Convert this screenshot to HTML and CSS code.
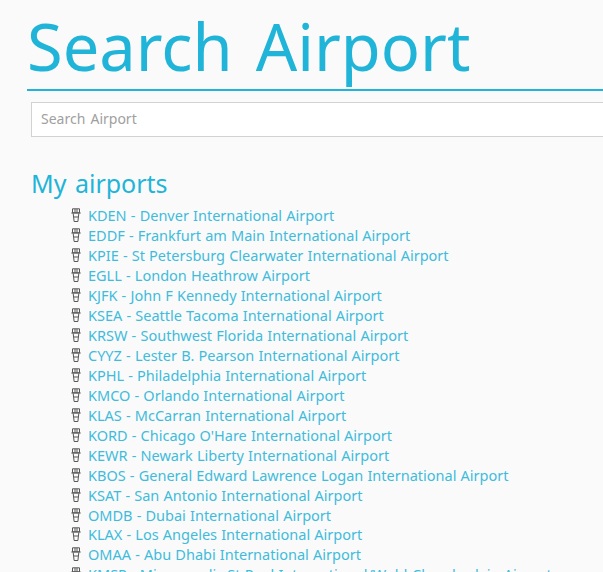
FILE: index.html
```html
<!DOCTYPE html>
<html lang="en">
  <head>
    <meta charset="UTF-8" />
    <meta name="viewport" content="width=device-width, initial-scale=1.0" />
    <title>Search Airport</title>
    <link rel="stylesheet" href="styles.css">
  </head>
  <body>
    <div class="page">
      <h1 class="page-title">Search Airport</h1>
      <input class="search-input" type="text" placeholder="Search Airport" />
      <h2 class="section-title">My airports</h2>
      <ul class="airport-list">
        <li><svg class="tower" viewBox="0 0 10 14"><use href="#tower-icon"/></svg><a href="#">KDEN - Denver International Airport</a></li>
        <li><svg class="tower" viewBox="0 0 10 14"><use href="#tower-icon"/></svg><a href="#">EDDF - Frankfurt am Main International Airport</a></li>
        <li><svg class="tower" viewBox="0 0 10 14"><use href="#tower-icon"/></svg><a href="#">KPIE - St Petersburg Clearwater International Airport</a></li>
        <li><svg class="tower" viewBox="0 0 10 14"><use href="#tower-icon"/></svg><a href="#">EGLL - London Heathrow Airport</a></li>
        <li><svg class="tower" viewBox="0 0 10 14"><use href="#tower-icon"/></svg><a href="#">KJFK - John F Kennedy International Airport</a></li>
        <li><svg class="tower" viewBox="0 0 10 14"><use href="#tower-icon"/></svg><a href="#">KSEA - Seattle Tacoma International Airport</a></li>
        <li><svg class="tower" viewBox="0 0 10 14"><use href="#tower-icon"/></svg><a href="#">KRSW - Southwest Florida International Airport</a></li>
        <li><svg class="tower" viewBox="0 0 10 14"><use href="#tower-icon"/></svg><a href="#">CYYZ - Lester B. Pearson International Airport</a></li>
        <li><svg class="tower" viewBox="0 0 10 14"><use href="#tower-icon"/></svg><a href="#">KPHL - Philadelphia International Airport</a></li>
        <li><svg class="tower" viewBox="0 0 10 14"><use href="#tower-icon"/></svg><a href="#">KMCO - Orlando International Airport</a></li>
        <li><svg class="tower" viewBox="0 0 10 14"><use href="#tower-icon"/></svg><a href="#">KLAS - McCarran International Airport</a></li>
        <li><svg class="tower" viewBox="0 0 10 14"><use href="#tower-icon"/></svg><a href="#">KORD - Chicago O'Hare International Airport</a></li>
        <li><svg class="tower" viewBox="0 0 10 14"><use href="#tower-icon"/></svg><a href="#">KEWR - Newark Liberty International Airport</a></li>
        <li><svg class="tower" viewBox="0 0 10 14"><use href="#tower-icon"/></svg><a href="#">KBOS - General Edward Lawrence Logan International Airport</a></li>
        <li><svg class="tower" viewBox="0 0 10 14"><use href="#tower-icon"/></svg><a href="#">KSAT - San Antonio International Airport</a></li>
        <li><svg class="tower" viewBox="0 0 10 14"><use href="#tower-icon"/></svg><a href="#">OMDB - Dubai International Airport</a></li>
        <li><svg class="tower" viewBox="0 0 10 14"><use href="#tower-icon"/></svg><a href="#">KLAX - Los Angeles International Airport</a></li>
        <li><svg class="tower" viewBox="0 0 10 14"><use href="#tower-icon"/></svg><a href="#">OMAA - Abu Dhabi International Airport</a></li>
        <li><svg class="tower" viewBox="0 0 10 14"><use href="#tower-icon"/></svg><a href="#">KMSP - Minneapolis St Paul International/Wold-Chamberlain Airport</a></li>
      </ul>
    </div>
    <svg class="icon-defs" aria-hidden="true">
      <symbol id="tower-icon" viewBox="0 0 10 14">
        <path d="M1.5 .8h7v4h-7zM0.3 5h9.4M2.2 5.5l.9 8h3.8l.9-8M3 9h4M4 1v3.5M6 1v3.5" fill="none" stroke="#555" stroke-width="1"/>
      </symbol>
    </svg>
  </body>
</html>
```

FILE: styles.css
```css
html {
  overflow: hidden;
}
body {
  margin: 0;
  background-color: #fafafa;
  font-family: "Noto Sans", sans-serif;
  color: #1fb4d8;
}
.page {
  width: 640px;
  height: 572px;
  padding-left: 27px;
  overflow: hidden;
}
/* Big heading with the underline */
.page-title {
  margin: 0;
  height: 89px;
  font-size: 65px;
  font-weight: 400;
  line-height: 93px;
  word-spacing: 6px;
  border-bottom: 2px solid #1fb4d8;
}
.search-input {
  display: block;
  box-sizing: border-box;
  width: 100%;
  height: 35px;
  margin: 11px 0 0 4px;
  padding: 0 9px 2px;
  background: #fff;
  border: 1px solid #d2d2d2;
  font-family: inherit;
  font-size: 14px;
  word-spacing: 1.5px;
}
.search-input::placeholder {
  color: #a0a0a0;
}
.section-title {
  margin: 28px 0 0 4px;
  font-size: 25px;
  font-weight: 400;
  line-height: 36px;
  word-spacing: 2px;
}
.airport-list {
  margin: 4.5px 0 0;
  padding: 0 0 0 44px;
  list-style: none;
}
.airport-list li {
  display: flex;
  align-items: center;
  gap: 7px;
  height: 19.95px;
  font-size: 14.5px;
  white-space: nowrap;
  word-spacing: 0.4px;
}
.airport-list a {
  color: #3fbcdc;
  text-decoration: none;
}
.tower {
  width: 10px;
  height: 14px;
  flex: none;
}
.icon-defs {
  display: none;
}
```
